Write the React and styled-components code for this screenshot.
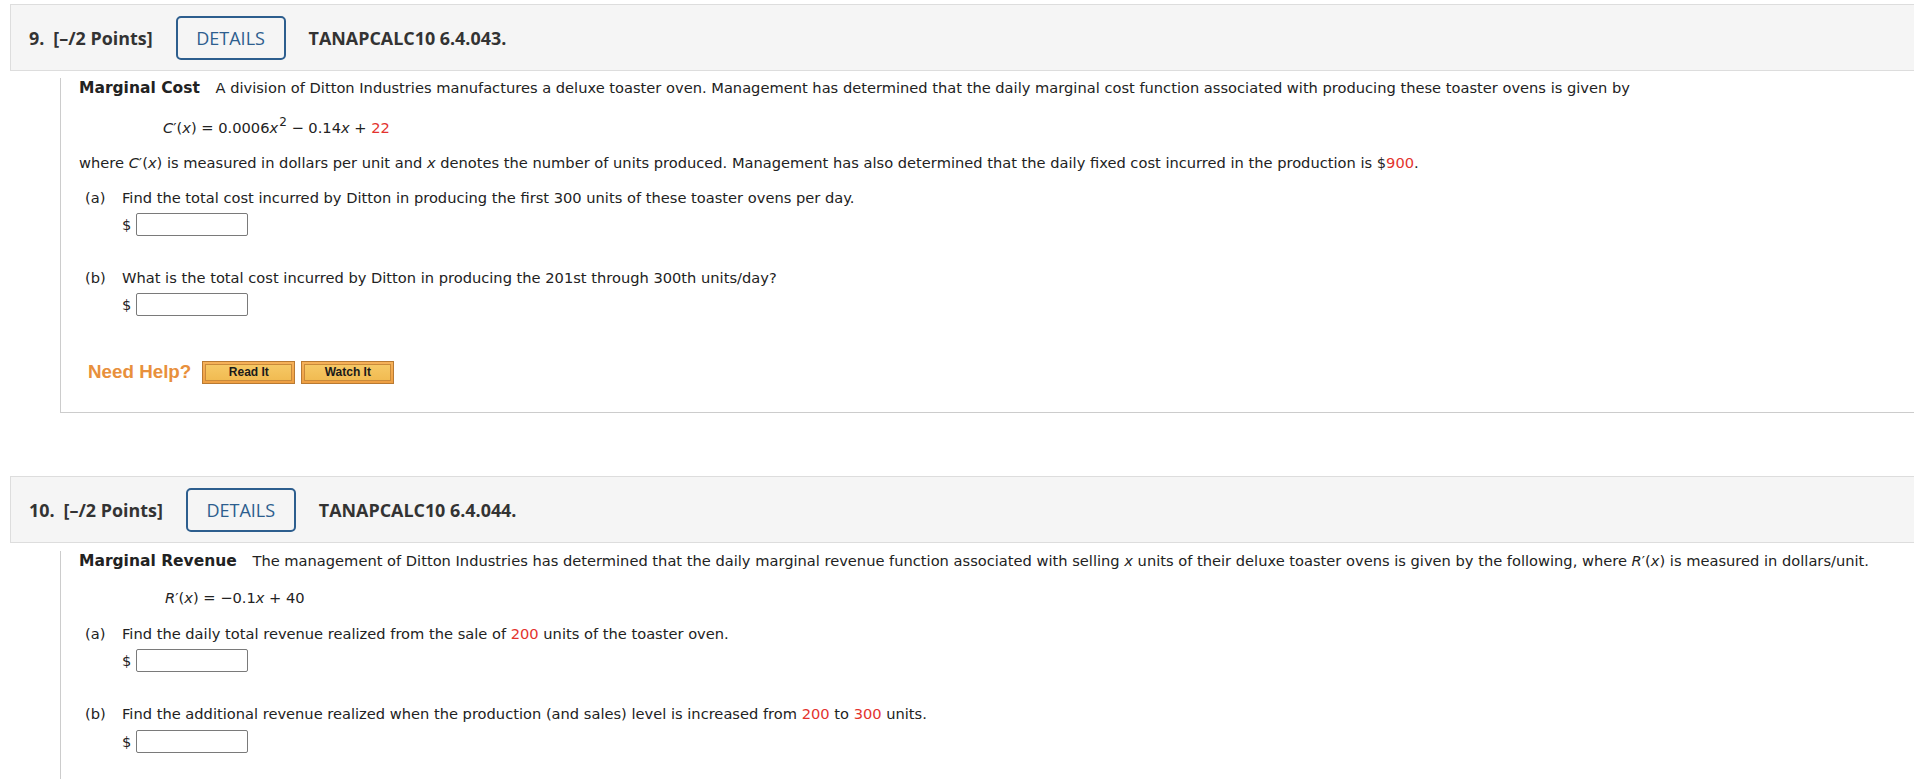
import React from "react";
import styled, { createGlobalStyle } from "styled-components";

const GlobalStyle = createGlobalStyle`
  html, body { margin: 0; padding: 0; background: #ffffff; }
  body { font-family: "DejaVu Sans", Verdana, sans-serif; color: #222; }
`;

const Page = styled.div`
  padding: 4px 0 0 10px;
`;

const Question = styled.section`
  margin-bottom: ${(p) => p.$gap || 0}px;
`;

const Header = styled.header`
  display: flex;
  align-items: center;
  height: 65px;
  background: #f5f5f5;
  border: 1px solid #dddddd;
  border-right: none;
  padding-left: 18px;
  font-family: "Open Sans", "DejaVu Sans", sans-serif;
  font-size: 17.9px;
  font-weight: 700;
  color: #333333;
`;

const Num = styled.span`
  margin-right: 9px;
`;

const Points = styled.span``;

const DetailsButton = styled.button`
  box-sizing: border-box;
  margin-left: 23px;
  width: 110px;
  height: 44px;
  border: 2px solid #2d5e8e;
  border-radius: 5px;
  background: transparent;
  color: #2d5e8e;
  font-family: "Open Sans", "DejaVu Sans", sans-serif;
  font-size: 18px;
  font-weight: 400;
`;

const Code = styled.span`
  margin-left: 23px;
`;

const Body = styled.div`
  margin-left: 50px;
  border-left: 1px solid #cccccc;
  border-bottom: ${(p) => (p.$closed ? "1px solid #cccccc" : "none")};
  padding: 0 0 ${(p) => p.$pb || 0}px 18px;
  font-size: 14.65px;
  min-height: ${(p) => p.$minH || 0}px;
`;

const Line = styled.div`
  line-height: 20px;
  margin-top: ${(p) => p.$mt || 0}px;
  white-space: nowrap;
`;

const Title = styled.b`
  font-weight: 700;
  font-size: 15.5px;
  margin-right: 11px;
`;

const Formula = styled(Line)`
  padding-left: ${(p) => p.$indent || 84}px;
`;

const I = styled.i`
  font-style: italic;
`;

const Red = styled.span`
  color: #e3332d;
`;

const Sup = styled.sup`
  font-size: 12px;
  line-height: 0;
  vertical-align: 7px;
  margin-left: 1px;
`;

const Part = styled.div`
  display: grid;
  grid-template-columns: 37px auto;
  padding-left: 6px;
  margin-top: ${(p) => p.$mt || 0}px;
  line-height: 20px;
  white-space: nowrap;
`;

const AnswerRow = styled.div`
  display: flex;
  align-items: center;
  gap: 5px;
  padding-left: 43px;
  margin-top: ${(p) => p.$mt || 0}px;
  height: 23px;
`;

const AnswerBox = styled.input`
  box-sizing: border-box;
  width: 112px;
  height: 23px;
  border: 1px solid #7a7a7a;
  border-radius: 2px;
  margin: 0;
  padding: 0 4px;
  background: #ffffff;
`;

const HelpRow = styled.div`
  display: flex;
  align-items: center;
  margin-top: ${(p) => p.$mt || 0}px;
  padding-left: 9px;
  height: 24px;
`;

const HelpLabel = styled.span`
  font-family: "Liberation Sans", Arial, sans-serif;
  font-weight: 700;
  font-size: 18.8px;
  color: #e8903c;
  margin-right: 11px;
`;

const HelpButton = styled.button`
  box-sizing: border-box;
  width: 93px;
  height: 23px;
  margin-right: 6px;
  padding: 2px;
  border: 1px solid #b97a32;
  background: linear-gradient(#f6b25a, #ee9f42);
  cursor: pointer;
  & > span {
    display: flex;
    align-items: center;
    justify-content: center;
    height: 100%;
    box-sizing: border-box;
    border: 1px solid #c98a3a;
    background: linear-gradient(#f6c865, #f1bb52);
    font-family: "Liberation Sans", Arial, sans-serif;
    font-weight: 700;
    font-size: 12px;
    color: #1a1a1a;
  }
`;

export default function App() {
  return (
    <>
      <GlobalStyle />
      <Page>
        <Question $gap={63}>
          <Header>
            <Num>9.</Num>
            <Points>[–/2 Points]</Points>
            <DetailsButton>DETAILS</DetailsButton>
            <Code>TANAPCALC10 6.4.043.</Code>
          </Header>
          <Body $closed $pb={28}>
            <Line $mt={7}>
              <Title>Marginal Cost</Title> A division of Ditton Industries manufactures a deluxe
              toaster oven. Management has determined that the daily marginal cost function
              associated with producing these toaster ovens is given by
            </Line>
            <Formula $mt={20} $indent={84}>
              <I>C</I>′(<I>x</I>) = 0.0006<I>x</I>
              <Sup>2</Sup> − 0.14<I>x</I> + <Red>22</Red>
            </Formula>
            <Line $mt={15}>
              where <I>C</I>′(<I>x</I>) is measured in dollars per unit and <I>x</I> denotes the
              number of units produced. Management has also determined that the daily fixed cost
              incurred in the production is $<Red>900</Red>.
            </Line>
            <Part $mt={15}>
              <span>(a)</span>
              <span>
                Find the total cost incurred by Ditton in producing the first 300 units of these
                toaster ovens per day.
              </span>
            </Part>
            <AnswerRow $mt={5}>
              <span>$</span>
              <AnswerBox type="text" />
            </AnswerRow>
            <Part $mt={32}>
              <span>(b)</span>
              <span>
                What is the total cost incurred by Ditton in producing the 201st through 300th
                units/day?
              </span>
            </Part>
            <AnswerRow $mt={5}>
              <span>$</span>
              <AnswerBox type="text" />
            </AnswerRow>
            <HelpRow $mt={44}>
              <HelpLabel>Need Help?</HelpLabel>
              <HelpButton>
                <span>Read It</span>
              </HelpButton>
              <HelpButton>
                <span>Watch It</span>
              </HelpButton>
            </HelpRow>
          </Body>
        </Question>
        <Question>
          <Header>
            <Num>10.</Num>
            <Points>[–/2 Points]</Points>
            <DetailsButton>DETAILS</DetailsButton>
            <Code>TANAPCALC10 6.4.044.</Code>
          </Header>
          <Body $minH={240}>
            <Line $mt={8}>
              <Title>Marginal Revenue</Title> The management of Ditton Industries has determined
              that the daily marginal revenue function associated with selling <I>x</I> units of
              their deluxe toaster ovens is given by the following, where <I>R</I>′(<I>x</I>) is
              measured in dollars/unit.
            </Line>
            <Formula $mt={17} $indent={86}>
              <I>R</I>′(<I>x</I>) = −0.1<I>x</I> + 40
            </Formula>
            <Part $mt={16}>
              <span>(a)</span>
              <span>
                Find the daily total revenue realized from the sale of <Red>200</Red> units of the
                toaster oven.
              </span>
            </Part>
            <AnswerRow $mt={5}>
              <span>$</span>
              <AnswerBox type="text" />
            </AnswerRow>
            <Part $mt={32}>
              <span>(b)</span>
              <span>
                Find the additional revenue realized when the production (and sales) level is
                increased from <Red>200</Red> to <Red>300</Red> units.
              </span>
            </Part>
            <AnswerRow $mt={6}>
              <span>$</span>
              <AnswerBox type="text" />
            </AnswerRow>
          </Body>
        </Question>
      </Page>
    </>
  );
}
